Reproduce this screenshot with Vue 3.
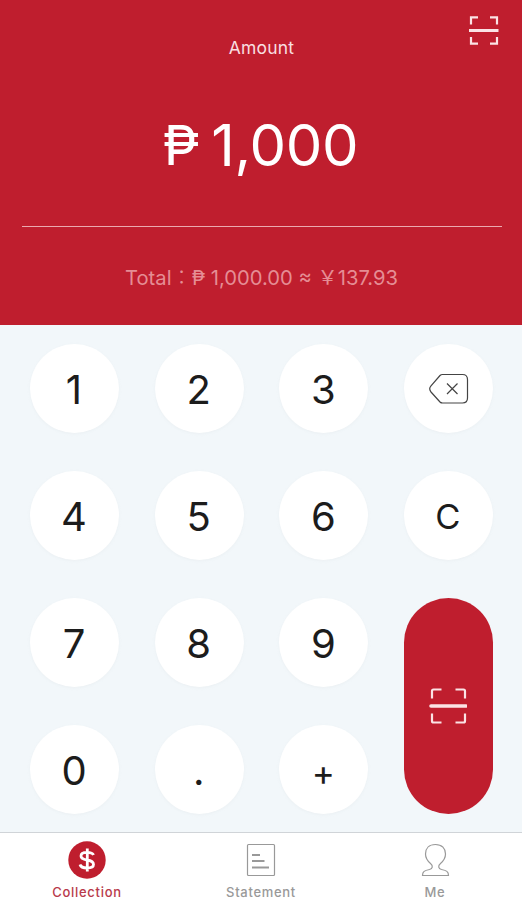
<template>
  <div class="page">
    <header class="header">
      <div class="top-bar">
        <span class="label">Amount</span>
        <button class="scan" aria-label="Scan">
          <svg width="30" height="30" viewBox="0 0 30 30">
            <path class="corner" d="M2 8.5V1.3H9M21 1.3H28V8.5M2 21V27.7H9M21 27.7H28V21" />
            <path class="beam" d="M0 14.5H29.5" />
          </svg>
        </button>
      </div>
      <div class="amount"><span class="peso">₱</span><span class="value">{{ amount.toLocaleString('en-US') }}</span></div>
      <div class="total">Total<span class="colon">：</span>₱ {{ total }} ≈ ￥{{ converted }}</div>
    </header>

    <main class="keypad">
      <button
        v-for="key in keys"
        :key="key.value"
        :class="['key', key.type]"
        @click="press(key.value)"
      >
        <svg v-if="key.type === 'delete'" width="40" height="32" viewBox="0 0 40 32">
          <path d="M13.5 1.5H33.5Q38.5 1.5 38.5 6.5V25Q38.5 30 33.5 30H13.5Q12 30 11 29L2 19Q-.6 15.8 2 12.8L11 2.5Q12 1.5 13.5 1.5Z" />
          <path class="cross" d="M18 10.5L28.5 21M28.5 10.5L18 21" />
        </svg>
        <svg v-else-if="key.type === 'pay'" width="38" height="38" viewBox="0 0 38 38">
          <path class="corner" d="M3 11.5V4Q3 2.5 4.5 2.5H12.5M26.5 2.5H34.5Q36 2.5 36 4V11.5M3 26.5V34Q3 35.5 4.5 35.5H12.5M26.5 35.5H34.5Q36 35.5 36 34V26.5" />
          <path class="beam" d="M2 19H37" />
        </svg>
        <span v-else>{{ key.value }}</span>
      </button>
    </main>

    <nav class="tabs">
      <button
        v-for="tab in tabs"
        :key="tab"
        :class="['tab', { active: tab === current }]"
        @click="current = tab"
      >
        <svg v-if="tab === 'Collection'" width="38" height="38" viewBox="0 0 38 38">
          <circle cx="19" cy="19" r="18.7" />
          <path class="dollar" d="M25.5 14Q24.5 11.3 19 11.3Q13 11.3 13 15Q13 18 19 19Q25.5 20 25.5 23.500Q25.500 27 19 27Q13 27 12 23.500M19.300 7.500V30.500" />
        </svg>
        <svg v-else-if="tab === 'Statement'" width="38" height="38" viewBox="0 0 38 38">
          <rect x="5.5" y="3.5" width="27" height="31" rx="1" />
          <path class="rows" d="M10 14H18M10 20H22.5M10 26.5H27" />
        </svg>
        <svg v-else width="38" height="38" viewBox="0 0 38 38">
          <path d="M19.5 3.5C13 3.5 9.5 7.5 9.5 13C9.5 16.5 11 19.5 14.5 22.5C17.500 25 16.500 27.500 13.500 28.500C8.500 29.500 6.500 30.500 6.500 34.500H32.500C32.500 30.500 30.500 29.500 25.500 28.500C22.500 27.500 21.500 25 24.500 22.500C28 19.500 29.500 16.500 29.500 13C29.500 7.500 26 3.500 19.500 3.500Z" />
        </svg>
        <span>{{ tab }}</span>
      </button>
    </nav>
  </div>
</template>

<script setup>
import { computed, ref } from 'vue';

const RATE = 0.13793;

const input = ref('1000');
const current = ref('Collection');
const tabs = ['Collection', 'Statement', 'Me'];

const keys = [
  { value: '1' },
  { value: '2' },
  { value: '3' },
  { value: 'del', type: 'delete' },
  { value: '4' },
  { value: '5' },
  { value: '6' },
  { value: 'C', type: 'clear' },
  { value: '7' },
  { value: '8' },
  { value: '9' },
  { value: 'pay', type: 'pay' },
  { value: '0' },
  { value: '.' },
  { value: '+', type: 'plus' },
];

// the input may hold a sum such as "500+250"
const amount = computed(() =>
  input.value.split('+').reduce((sum, part) => sum + (Number(part) || 0), 0)
);

const format = (n) =>
  n.toLocaleString('en-US', { minimumFractionDigits: 2, maximumFractionDigits: 2 });

const total = computed(() => format(amount.value));
const converted = computed(() => format(amount.value * RATE));

function press(value) {
  if (value === 'pay') return;
  if (value === 'C') {
    input.value = '';
  } else if (value === 'del') {
    input.value = input.value.slice(0, -1);
  } else {
    input.value += value;
  }
}
</script>

<style>
body {
  margin: 0;
}
</style>

<style scoped>
.page {
  display: flex;
  flex-direction: column;
  width: 522px;
  height: 900px;
  overflow: hidden;
  background: #f2f7fa;
  font-family: Inter, 'Noto Sans CJK JP', sans-serif;
}

button {
  padding: 0;
  border: 0;
  background: none;
  font-family: inherit;
  cursor: pointer;
}

svg {
  display: block;
  fill: none;
}

.header {
  box-sizing: border-box;
  height: 325px;
  background: #bf1e2e;
  color: #fff;
}

.top-bar {
  display: grid;
  grid-template-columns: 1fr auto 1fr;
  height: 59px;
}

.label {
  grid-column: 2;
  align-self: end;
  padding-left: 1px;
  font-size: 17.5px;
  line-height: 22px;
  letter-spacing: 0.2px;
  color: #f9dfe1;
}

.scan {
  justify-self: end;
  align-self: start;
  margin: 16px 23px 0 0;
}

.corner {
  stroke: #fbe3e5;
  stroke-width: 2.2;
}

.beam {
  stroke: #fbe3e5;
  stroke-width: 3;
}

.amount {
  display: flex;
  justify-content: center;
  gap: 12px;
  height: 168px;
  margin: 0 20px 0 22px;
  box-sizing: border-box;
  padding: 51px 3px 0 0;
  border-bottom: 1px solid #eba9af;
  font-size: 58px;
  line-height: 70px;
}

.peso {
  font-size: 55px;
}

.value {
  letter-spacing: -0.3px;
}

.total {
  padding: 36px 0 0 1px;
  text-align: center;
  font-size: 20.2px;
  line-height: 30px;
  white-space: pre;
  color: #e58d94;
}

.colon {
  font-weight: 300;
}

.keypad {
  box-sizing: border-box;
  display: grid;
  grid-template-columns: repeat(4, 89px);
  grid-template-rows: repeat(4, 89px);
  justify-content: space-between;
  align-content: space-between;
  height: 507px;
  padding: 19px 29px 18px 30px;
}

.key {
  display: flex;
  align-items: center;
  justify-content: center;
  border-radius: 45px;
  background: #fff;
  box-shadow: 0 1px 3px rgba(200, 205, 210, 0.15);
  font-size: 40px;
  font-weight: 400;
  color: #1c1c1c;
}

.key span {
  padding: 1px 1px 0 0;
}

.clear {
  font-size: 34.5px;
}

.plus {
  font-size: 35px;
}

.plus span {
  padding-top: 4px;
}

.delete svg {
  margin-left: 2px;
}

.delete path {
  stroke: #444;
  stroke-width: 1.2;
}

.pay {
  grid-row: span 2;
  background: #bf1e2e;
  box-shadow: none;
}

.pay .beam {
  stroke-width: 3.6;
  stroke-linecap: round;
}

.tabs {
  box-sizing: border-box;
  display: grid;
  grid-template-columns: repeat(3, 1fr);
  height: 68px;
  border-top: 1px solid #d0d4d8;
  background: #fff;
}

.tab {
  display: flex;
  flex-direction: column;
  align-items: center;
  padding-top: 8px;
  font-size: 13px;
  font-weight: 500;
  line-height: 16px;
  letter-spacing: 0.7px;
  color: #999;
}

.tab span {
  margin-top: 5px;
}

.tab svg {
  stroke: #999;
  stroke-width: 1.2;
}

.tab.active {
  color: #b83a4b;
}

.tab circle {
  fill: #bf1e2e;
  stroke: none;
}

.tab .dollar {
  stroke: #fff;
  stroke-width: 2.8;
}

.tab .rows {
  stroke-width: 1.8;
}
</style>
